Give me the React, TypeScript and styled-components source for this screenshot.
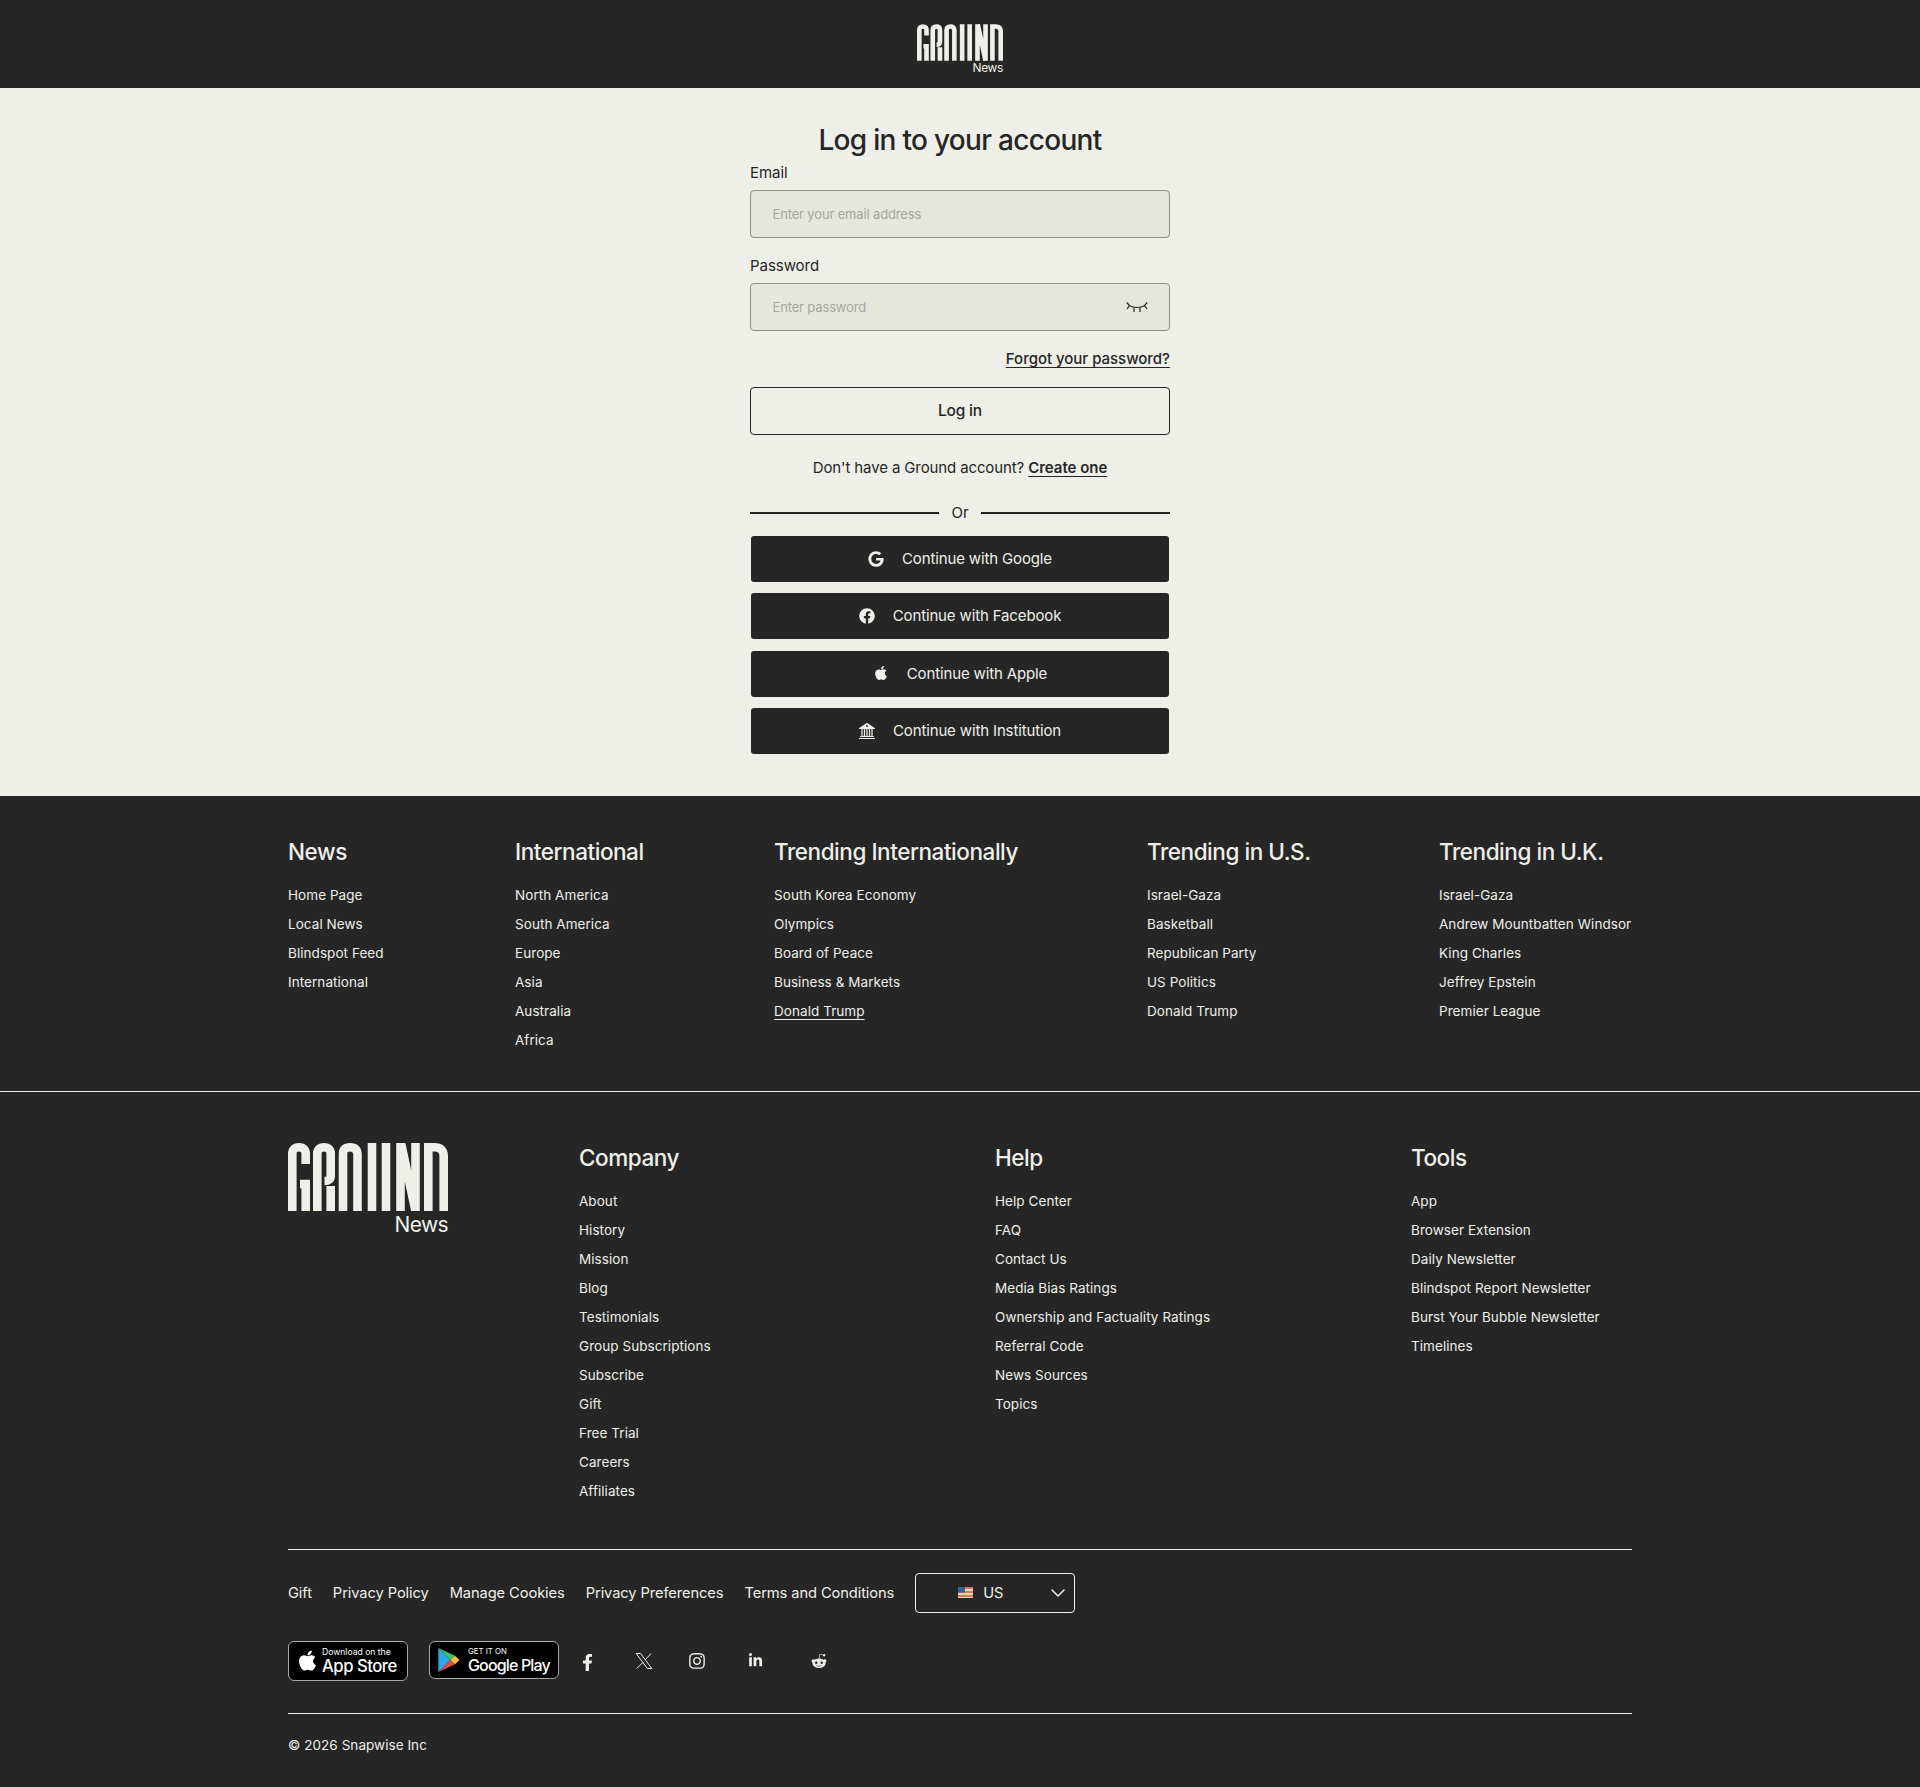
import styled, { createGlobalStyle } from "styled-components";
import { ChevronDown } from "lucide-react";
import { FaApple, FaFacebook, FaFacebookF, FaGoogle, FaInstagram, FaLinkedinIn, FaRedditAlien } from "react-icons/fa";
import { BsBank2 } from "react-icons/bs";

const dark = "#262626";
const light = "#eeefe9";

const GlobalStyle = createGlobalStyle`
  html, body {
    margin: 0;
    padding: 0;
    background: ${dark};
    font-family: Inter, "Liberation Sans", sans-serif;
    color: ${light};
  }
  * { box-sizing: border-box; }
`;

const TopBar = styled.header`
  height: 88px;
  background: ${dark};
  display: flex;
  justify-content: center;
  padding-top: 24px;
`;

const LogoWrap = styled.div`
  display: inline-flex;
  flex-direction: column;
  align-items: flex-end;
`;

const LogoMark = styled.svg<{ $w: number; $h: number }>`
  display: block;
  width: ${(p) => p.$w}px;
  height: ${(p) => p.$h}px;
`;

const LogoNews = styled.span<{ $size: number; $top: number }>`
  font-size: ${(p) => p.$size}px;
  line-height: ${(p) => p.$size}px;
  margin-top: ${(p) => p.$top}px;
  letter-spacing: -0.03em;
  color: ${light};
`;

const Main = styled.main`
  background: ${light};
  color: ${dark};
  padding: 34px 0 41.8px;
  display: flex;
  justify-content: center;
`;

const FormCol = styled.form`
  width: 420px;
  display: flex;
  flex-direction: column;
`;

const Title = styled.h1`
  margin: 0 0 5px;
  font-size: 28px;
  line-height: 36px;
  font-weight: 500;
  text-align: center;
  letter-spacing: -0.7px;
`;

const Label = styled.label`
  font-size: 15px;
  line-height: 20px;
  margin-bottom: 7px;
  letter-spacing: -0.05px;
`;

const InputWrap = styled.div`
  position: relative;
  margin-bottom: 18px;
`;

const Input = styled.input`
  display: block;
  width: 100%;
  height: 48px;
  background: #e5e6de;
  border: 1px solid #8e8f8b;
  border-radius: 4px;
  padding: 0 21.5px;
  font-family: inherit;
  font-size: 13px;
  letter-spacing: -0.15px;
  &::placeholder { color: #a5a69e; opacity: 1; }
`;

const EyeButton = styled.svg`
  position: absolute;
  right: 22px;
  top: 17px;
  width: 22px;
  height: 13px;
`;

const ForgotRow = styled.div`
  display: flex;
  justify-content: flex-end;
  margin-bottom: 18px;
`;

const TextLink = styled.a<{ $bold?: boolean }>`
  font-size: 15px;
  line-height: 20px;
  font-weight: ${(p) => (p.$bold ? 600 : 500)};
  color: ${dark};
  text-decoration: underline;
  text-underline-offset: 3px;
  letter-spacing: -0.02px;
`;

const LoginButton = styled.button`
  height: 48px;
  padding: 0 0 2px;
  background: transparent;
  border: 1px solid ${dark};
  border-radius: 4px;
  color: ${dark};
  font-family: inherit;
  font-size: 15.5px;
  font-weight: 500;
  letter-spacing: -0.2px;
  margin-bottom: 23px;
`;

const SignupLine = styled.p`
  margin: 0 0 25px;
  text-align: center;
  font-size: 15px;
  line-height: 20px;
  letter-spacing: -0.12px;
`;

const OrRow = styled.div`
  display: flex;
  align-items: center;
  gap: 12px;
  font-size: 15px;
  line-height: 20px;
  margin-bottom: 13px;
  &::before, &::after {
    content: "";
    flex: 1;
    height: 2px;
    background: ${dark};
  }
`;

const Providers = styled.div`
  display: flex;
  flex-direction: column;
  gap: 11.4px;
  padding: 0 1px;
`;

const ProviderButton = styled.button`
  height: 46px;
  padding: 0 0 1px;
  background: ${dark};
  color: ${light};
  border: 0;
  border-radius: 3px;
  display: flex;
  align-items: center;
  justify-content: center;
  gap: 18px;
  font-family: inherit;
  font-size: 15px;
  letter-spacing: -0.14px;
  svg { width: 16px; height: 16px; flex: none; }
`;

const NavBlock = styled.section`
  padding: 41px 288px 41px;
  border-bottom: 1px solid ${light};
  display: grid;
  grid-template-columns: 227px 259px 373px 292px 1fr;
`;

const LowerBlock = styled.section`
  padding: 51px 288px 0;
`;

const LinkGrid = styled.div`
  display: grid;
  grid-template-columns: 291px 416px 416px 1fr;
  padding-bottom: 48px;
  border-bottom: 1px solid ${light};
`;

const ColHead = styled.h3`
  margin: 0 0 18px;
  height: 30px;
  font-size: 22.5px;
  line-height: 30px;
  font-weight: 500;
  letter-spacing: -0.45px;
  white-space: nowrap;
`;

const ColLinks = styled.ul`
  list-style: none;
  margin: 0;
  padding: 0;
  display: flex;
  flex-direction: column;
  gap: 9px;
`;

const ColLink = styled.li<{ $underline?: boolean }>`
  font-size: 13.5px;
  line-height: 20px;
  letter-spacing: 0.06px;
  white-space: nowrap;
  text-decoration: ${(p) => (p.$underline ? "underline" : "none")};
  text-underline-offset: 3px;
`;

const LegalRow = styled.div`
  display: flex;
  align-items: center;
  gap: 21px;
  margin-top: 23px;
  font-size: 14.7px;
  letter-spacing: -0.1px;
`;

const RegionSelect = styled.div`
  width: 160px;
  height: 40px;
  border: 1px solid ${light};
  border-radius: 4px;
  display: flex;
  align-items: center;
  gap: 10px;
  padding: 0 4px 0 42px;
  svg:last-child { margin-left: auto; }
`;

const Flag = styled.svg`
  width: 15px;
  height: 11px;
  flex: none;
`;

const StoreRow = styled.div`
  display: flex;
  align-items: center;
  margin-top: 28px;
  padding-bottom: 32px;
  border-bottom: 1px solid ${light};
`;

const Badge = styled.div<{ $w: number; $h: number; $after: number; $gap: number; $pad: number }>`
  width: ${(p) => p.$w}px;
  height: ${(p) => p.$h}px;
  align-self: flex-start;
  flex: none;
  background: #000;
  border: 1px solid #a6a6a6;
  border-radius: 6px;
  display: flex;
  align-items: center;
  gap: ${(p) => p.$gap}px;
  padding-left: ${(p) => p.$pad}px;
  margin-right: ${(p) => p.$after}px;
  color: #fff;
`;

const BadgeText = styled.div`
  display: flex;
  flex-direction: column;
  white-space: nowrap;
`;

const BadgeSmall = styled.span<{ $size: number }>`
  font-size: ${(p) => p.$size}px;
  line-height: 10px;
`;

const BadgeBig = styled.span<{ $size: number; $track: number }>`
  font-size: ${(p) => p.$size}px;
  line-height: 18px;
  font-weight: 500;
  letter-spacing: ${(p) => p.$track}px;
`;

const Social = styled.a<{ $w: number; $size: number; $top?: number }>`
  width: ${(p) => p.$w}px;
  display: flex;
  justify-content: center;
  margin-top: ${(p) => p.$top ?? 0}px;
  color: ${light};
  svg { width: ${(p) => p.$size}px; height: ${(p) => p.$size}px; }
`;

const Copyright = styled.div`
  padding: 21px 0 32px;
  font-size: 13.5px;
  line-height: 20px;
  letter-spacing: 0.05px;
`;

function GroundMark({ w, h }: { w: number; h: number }) {
  return (
    <LogoMark $w={w} $h={h} viewBox="0 0 160 68" role="img" aria-label="Ground">
      <g fill="none" stroke={light} strokeWidth="8.6">
        <path d="M17.7 21V11Q17.7 4.3 11 4.3T4.3 11V68" />
        <path d="M12 41H17.7V68" />
        <path d="M29.3 68V11Q29.3 4.3 36 4.3T42.7 11V33Q42.7 38 36.5 38M42.7 43V68" />
        <path d="M55 68V11Q55 4.3 62 4.3T69.5 11V68" />
        <path d="M84 0V68M98 0V68" />
        <path d="M112.5 68V0M127.5 68V0M113 0L127.5 68" />
        <path d="M140.3 68V4.3H146Q155.7 4.3 155.7 13V68" />
      </g>
    </LogoMark>
  );
}

const navColumns = [
  { title: "News", links: ["Home Page", "Local News", "Blindspot Feed", "International"] },
  { title: "International", links: ["North America", "South America", "Europe", "Asia", "Australia", "Africa"] },
  { title: "Trending Internationally", links: ["South Korea Economy", "Olympics", "Board of Peace", "Business & Markets", "Donald Trump"], underlined: "Donald Trump" },
  { title: "Trending in U.S.", links: ["Israel-Gaza", "Basketball", "Republican Party", "US Politics", "Donald Trump"] },
  { title: "Trending in U.K.", links: ["Israel-Gaza", "Andrew Mountbatten Windsor", "King Charles", "Jeffrey Epstein", "Premier League"] },
];

const lowerColumns = [
  { title: "Company", links: ["About", "History", "Mission", "Blog", "Testimonials", "Group Subscriptions", "Subscribe", "Gift", "Free Trial", "Careers", "Affiliates"] },
  { title: "Help", links: ["Help Center", "FAQ", "Contact Us", "Media Bias Ratings", "Ownership and Factuality Ratings", "Referral Code", "News Sources", "Topics"] },
  { title: "Tools", links: ["App", "Browser Extension", "Daily Newsletter", "Blindspot Report Newsletter", "Burst Your Bubble Newsletter", "Timelines"] },
];

const LinkColumn = ({ title, links, underlined }: { title: string; links: string[]; underlined?: string }) => (
  <div>
    <ColHead>{title}</ColHead>
    <ColLinks>
      {links.map((l) => (
        <ColLink key={l} $underline={l === underlined}>
          {l}
        </ColLink>
      ))}
    </ColLinks>
  </div>
);

const XIcon = () => (
  <svg viewBox="0 0 18 18" fill="none" stroke="currentColor" strokeWidth="1">
    <path d="M1.2 1.5H5.6L16.8 16.5H12.4Z" />
    <path d="M16 1.5L10.2 7.9M7.9 10.4L1.8 16.5" />
  </svg>
);

export default function App() {
  return (
    <>
      <GlobalStyle />
      <TopBar>
        <LogoWrap>
          <GroundMark w={86} h={37} />
          <LogoNews $size={12} $top={1}>News</LogoNews>
        </LogoWrap>
      </TopBar>
      <Main>
        <FormCol>
          <Title>Log in to your account</Title>
          <Label>Email</Label>
          <InputWrap>
            <Input placeholder="Enter your email address" />
          </InputWrap>
          <Label>Password</Label>
          <InputWrap>
            <Input placeholder="Enter password" />
            <EyeButton viewBox="0 0 22 13" fill="none" stroke={dark} strokeWidth="1.2">
              <path d="M3 5.5Q11 9.5 19 5.5" />
              <path d="M0.8 2.5L3.5 5.5L1 9M21.2 2.5L18.5 5.5L21 9M8 7.5V12M14 7.5V12" />
            </EyeButton>
          </InputWrap>
          <ForgotRow>
            <TextLink>Forgot your password?</TextLink>
          </ForgotRow>
          <LoginButton type="button">Log in</LoginButton>
          <SignupLine>
            Don't have a Ground account? <TextLink $bold>Create one</TextLink>
          </SignupLine>
          <OrRow>Or</OrRow>
          <Providers>
            <ProviderButton type="button"><FaGoogle />Continue with Google</ProviderButton>
            <ProviderButton type="button"><FaFacebook />Continue with Facebook</ProviderButton>
            <ProviderButton type="button"><FaApple />Continue with Apple</ProviderButton>
            <ProviderButton type="button"><BsBank2 />Continue with Institution</ProviderButton>
          </Providers>
        </FormCol>
      </Main>
      <footer>
        <NavBlock>
          {navColumns.map((c) => (
            <LinkColumn key={c.title} {...c} />
          ))}
        </NavBlock>
        <LowerBlock>
          <LinkGrid>
            <div>
              <LogoWrap>
                <GroundMark w={160} h={68} />
                <LogoNews $size={21} $top={3}>News</LogoNews>
              </LogoWrap>
            </div>
            {lowerColumns.map((c) => (
              <LinkColumn key={c.title} {...c} />
            ))}
          </LinkGrid>
          <LegalRow>
            <span>Gift</span>
            <span>Privacy Policy</span>
            <span>Manage Cookies</span>
            <span>Privacy Preferences</span>
            <span>Terms and Conditions</span>
            <RegionSelect>
              <Flag viewBox="0 0 15 11">
                <rect width="15" height="11" fill="#e9d6a8" />
                <path d="M0 1H15M0 5H15M0 9H15" stroke="#cf5b4e" strokeWidth="1.6" />
                <rect width="7" height="5.5" fill="#3d5a9c" />
              </Flag>
              US
              <ChevronDown size={24} strokeWidth={1.5} />
            </RegionSelect>
          </LegalRow>
          <StoreRow>
            <Badge $w={120} $h={40} $after={21} $gap={3} $pad={7}>
              <FaApple size={23} />
              <BadgeText>
                <BadgeSmall $size={8.6}>Download on the</BadgeSmall>
                <BadgeBig $size={16.7} $track={-0.5}>App Store</BadgeBig>
              </BadgeText>
            </Badge>
            <Badge $w={130} $h={38} $after={1} $gap={8} $pad={8}>
              <svg width="22" height="24" viewBox="0 0 23 26">
                <path d="M0 0V26L13 13Z" fill="#2fa8e8" />
                <path d="M0 0L13 13L18 8.5Z" fill="#3fc06a" />
                <path d="M0 26L13 13L18 17.5Z" fill="#e8484c" />
                <path d="M18 8.5L23 13L18 17.5L13 13Z" fill="#fbc02d" />
              </svg>
              <BadgeText>
                <BadgeSmall $size={7.8}>GET IT ON</BadgeSmall>
                <BadgeBig $size={16} $track={-0.85}>Google Play</BadgeBig>
              </BadgeText>
            </Badge>
            <Social $w={54} $size={17} $top={4}><FaFacebookF /></Social>
            <Social $w={59} $size={18}><XIcon /></Social>
            <Social $w={48} $size={18}><FaInstagram /></Social>
            <Social $w={69} $size={15}><FaLinkedinIn /></Social>
            <Social $w={58} $size={16}><FaRedditAlien /></Social>
          </StoreRow>
          <Copyright>© 2026 Snapwise Inc</Copyright>
        </LowerBlock>
      </footer>
    </>
  );
}
